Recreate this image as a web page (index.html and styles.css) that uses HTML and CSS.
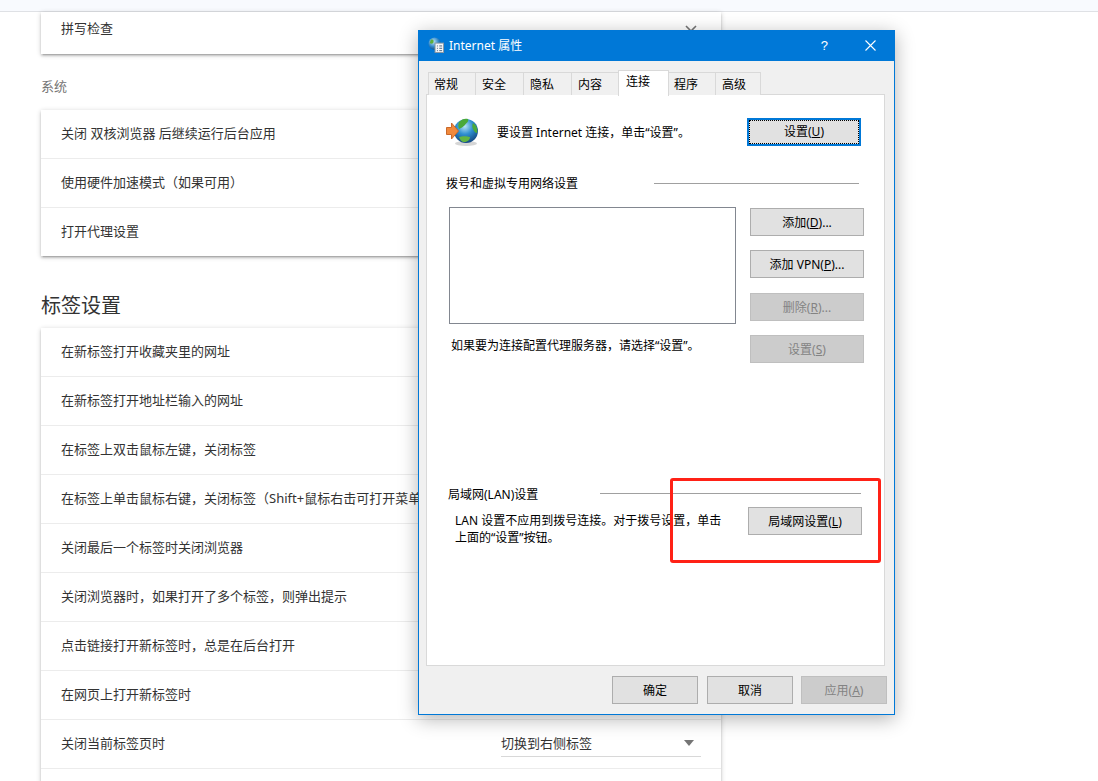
FILE: index.html
```html
<!DOCTYPE html>
<html lang="zh-CN">
<head>
    <meta charset="UTF-8">
    <title>设置</title>
    <link rel="stylesheet" href="styles.css">
</head>
<body>
    <div class="top-bar"></div>

    <main class="settings">
        <section class="card card-first">
            <div class="row row-first">
                <span>拼写检查</span>
                <svg class="chevron" width="12" height="8" viewBox="0 0 12 8"><path d="M1 1l5 5 5-5" fill="none" stroke="#757575" stroke-width="1.6"/></svg>
            </div>
        </section>

        <div class="group-label">系统</div>
        <section class="card">
            <div class="row">关闭 双核浏览器 后继续运行后台应用</div>
            <div class="row">使用硬件加速模式（如果可用）</div>
            <div class="row">打开代理设置</div>
        </section>

        <h2 class="section-title">标签设置</h2>
        <section class="card">
            <div class="row">在新标签打开收藏夹里的网址</div>
            <div class="row">在新标签打开地址栏输入的网址</div>
            <div class="row">在标签上双击鼠标左键，关闭标签</div>
            <div class="row">在标签上单击鼠标右键，关闭标签（Shift+鼠标右击可打开菜单）</div>
            <div class="row">关闭最后一个标签时关闭浏览器</div>
            <div class="row">关闭浏览器时，如果打开了多个标签，则弹出提示</div>
            <div class="row">点击链接打开新标签时，总是在后台打开</div>
            <div class="row">在网页上打开新标签时</div>
            <div class="row">
                <span>关闭当前标签页时</span>
                <div class="select">
                    <span>切换到右侧标签</span>
                    <i class="select-arrow"></i>
                </div>
            </div>
            <div class="row"></div>
        </section>
    </main>

    <div class="dialog">
        <header class="title-bar">
            <svg class="title-icon" width="16" height="16" viewBox="0 0 17 17">
                <defs>
                    <radialGradient id="smallGlobe" cx="0.4" cy="0.35" r="0.7">
                        <stop offset="0" stop-color="#bfe6f7"/>
                        <stop offset="0.6" stop-color="#2f86c8"/>
                        <stop offset="1" stop-color="#15497f"/>
                    </radialGradient>
                </defs>
                <circle cx="7" cy="7" r="6.5" fill="url(#smallGlobe)"/>
                <path d="M3 3c2-1 3 0 3 2S3 8 2 6zM8 9c2-1 4 0 3 2s-3 2-4 1z" fill="#5cae3c"/>
                <rect x="7.5" y="6.5" width="9" height="10" fill="#f4f6f8" stroke="#8b97a3"/>
                <path d="M9.5 9.500h1M12 9.500h3M9.500 12h1M12 12h3M9.500 14.500h1M12 14.500h3" stroke="#44607c"/>
            </svg>
            <span class="title-text">Internet 属性</span>
            <span class="title-help">?</span>
            <svg class="title-close" width="11" height="11" viewBox="0 0 11 11"><path d="M.5.5l10 10M10.500.5l-10 10" stroke="#fff" stroke-width="1.1"/></svg>
        </header>

        <nav class="tabs">
            <span class="tab">常规</span>
            <span class="tab">安全</span>
            <span class="tab">隐私</span>
            <span class="tab">内容</span>
            <span class="tab tab-active">连接</span>
            <span class="tab">程序</span>
            <span class="tab">高级</span>
        </nav>

        <div class="panel">
            <div class="setup">
                <svg class="globe" width="34" height="30" viewBox="0 0 34 30">
                    <defs>
                        <radialGradient id="bigGlobe" cx="0.45" cy="0.3" r="0.75">
                            <stop offset="0" stop-color="#b9e4f6"/>
                            <stop offset="0.45" stop-color="#2f8fd0"/>
                            <stop offset="1" stop-color="#103f78"/>
                        </radialGradient>
                    </defs>
                    <ellipse cx="21" cy="26.500" rx="11" ry="2.500" fill="#d5d5d5"/>
                    <circle cx="21" cy="14" r="12" fill="url(#bigGlobe)"/>
                    <path d="M14 5c3-3 6-4 9-3 1 3-2 4-3 6-2 2-4 3-6 4-1-2-1-5 0-7z" fill="#4aa93a"/>
                    <path d="M14 20c3-1 8-1 11 0 0 3-3 5-6 5-2 0-4-2-5-5z" fill="#62b542"/>
                    <path d="M28 6c3 2 5 5 4 10-2 0-3-2-4-4s-1-4 0-6z" fill="#4aa93a"/>
                    <path d="M1.500 10.500h5V6l7 8-7 8v-4.500h-5z" fill="#f0893c" stroke="#c9682a"/>
                </svg>
                <p class="setup-text">要设置 Internet 连接，单击“设置”。</p>
                <button class="btn btn-default"><span class="btn-focus">设置(<u>U</u>)</span></button>
            </div>

            <div class="legend legend-vpn">
                <span>拨号和虚拟专用网络设置</span>
                <i class="legend-line"></i>
            </div>

            <div class="vpn">
                <div class="vpn-left">
                    <div class="vpn-list"></div>
                    <p class="vpn-note">如果要为连接配置代理服务器，请选择“设置”。</p>
                </div>
                <div class="vpn-buttons">
                    <button class="btn">添加(<u>D</u>)...</button>
                    <button class="btn">添加 VPN(<u>P</u>)...</button>
                    <button class="btn btn-disabled">删除(<u>R</u>)...</button>
                    <button class="btn btn-disabled">设置(<u>S</u>)</button>
                </div>
            </div>

            <div class="legend legend-lan">
                <span>局域网(LAN)设置</span>
                <i class="legend-line"></i>
            </div>

            <div class="lan">
                <p class="lan-text">LAN 设置不应用到拨号连接。对于拨号设置，单击<br>上面的“设置”按钮。</p>
                <button class="btn">局域网设置(<u>L</u>)</button>
            </div>
        </div>

        <footer class="dialog-footer">
            <button class="btn">确定</button>
            <button class="btn">取消</button>
            <button class="btn btn-disabled">应用(<u>A</u>)</button>
        </footer>
    </div>

    <div class="red-mark"></div>
</body>
</html>
```

FILE: styles.css
```css
/* Page behind the dialog */
body {
    margin: 0;
    height: 781px;
    overflow: hidden;
    background-color: #fff;
    font-family: "Noto Sans", "Noto Sans CJK SC", sans-serif;
    font-size: 13px;
    color: #333;
}
p {
    margin: 0;
}
.top-bar {
    height: 11px;
    background-color: #f8fafe;
    border-bottom: 1px solid #dfe1e5;
}
.settings {
    width: 680px;
    margin-left: 41px;
}
.card {
    background-color: #fff;
    box-shadow: 0 2px 2px rgba(0, 0, 0, 0.14), 0 3px 1px -2px rgba(0, 0, 0, 0.12), 0 1px 5px rgba(0, 0, 0, 0.2);
    line-height: 18px;
}
.row {
    display: flex;
    align-items: center;
    justify-content: space-between;
    box-sizing: content-box;
    height: 45px;
    padding: 0 20px 3px;
    border-top: 1px solid #ececec;
    white-space: nowrap;
}
.row:first-child {
    border-top: none;
}
.row-first {
    height: 32px;
    padding-bottom: 10px;
}
.chevron {
    margin-right: 4px;
    margin-top: 2px;
}
.group-label {
    margin: 23px 0 15px;
    line-height: 18px;
    color: #757575;
}
.section-title {
    margin: 36px 0 8px;
    font-size: 20px;
    font-weight: normal;
    line-height: 28px;
    color: #333;
}
.select {
    display: flex;
    align-items: center;
    justify-content: space-between;
    box-sizing: border-box;
    width: 200px;
    height: 27px;
    margin-top: 1px;
    padding-right: 7px;
    border-bottom: 1px solid #d8d8d8;
}
.select-arrow {
    width: 0;
    height: 0;
    border-left: 5px solid transparent;
    border-right: 5px solid transparent;
    border-top: 6px solid #757575;
}

/* Internet properties dialog */
.dialog {
    position: absolute;
    left: 418px;
    top: 30px;
    box-sizing: border-box;
    width: 477px;
    height: 685px;
    border: 1px solid #0078d7;
    background-color: #f0f0f0;
    box-shadow: 0 4px 18px rgba(0, 0, 0, 0.3);
    font-size: 12px;
    color: #000;
}
.title-bar {
    display: flex;
    align-items: center;
    box-sizing: border-box;
    height: 30px;
    padding: 0 0 2px 9px;
    background-color: #0078d7;
    color: #fff;
}
.title-icon {
    margin-right: 5px;
}
.title-text {
    font-size: 12px;
}
.title-help {
    margin-left: auto;
    margin-right: 37px;
    font-family: "Liberation Sans", sans-serif;
    font-size: 13px;
}
.title-close {
    margin-right: 18px;
}
.tabs {
    display: flex;
    align-items: flex-end;
    height: 34px;
    padding-left: 9px;
    margin-bottom: -1px;
    position: relative;
}
.tab {
    box-sizing: border-box;
    width: 48px;
    height: 23px;
    padding-left: 6px;
    border: 1px solid #d9d9d9;
    border-bottom: none;
    border-right: none;
    line-height: 23px;
    background-color: #f0f0f0;
}
.tab:first-child {
    width: 47px;
    padding-left: 5px;
}
.tab:last-child {
    width: 46px;
    border-right: 1px solid #d9d9d9;
}
.tab:nth-child(4) {
    width: 47px;
}
.tab-active {
    width: 51px;
    height: 26px;
    border-right: 1px solid #d9d9d9;
    background-color: #fff;
    position: relative;
    line-height: 22px;
    padding-left: 7px;
    margin-bottom: -1px;
}
.tab-active + .tab {
    border-left: none;
    width: 46px;
    padding-left: 5px;
}
.panel {
    box-sizing: border-box;
    width: 459px;
    height: 572px;
    margin-left: 7px;
    padding-top: 23px;
    border: 1px solid #d9d9d9;
    background-color: #fff;
}
.setup {
    display: flex;
    align-items: center;
    height: 28px;
    padding-left: 18px;
}
.setup-text {
    margin-left: 18px;
}
.btn {
    box-sizing: border-box;
    width: 114px;
    height: 28px;
    padding: 0;
    border: 1px solid #adadad;
    background-color: #e1e1e1;
    font-family: inherit;
    font-size: 12px;
    color: #000;
}
.btn-default {
    margin-left: auto;
    margin-right: 23px;
    border: 2px solid #0078d7;
    padding: 0;
}
.btn-focus {
    display: block;
    height: 24px;
    line-height: 21px;
    box-sizing: border-box;
    border: 1px dotted #000;
}
.btn-disabled {
    background-color: #ccc;
    border-color: #bfbfbf;
    color: #838383;
}
.legend {
    display: flex;
    align-items: center;
    height: 18px;
}
.legend-line {
    margin-left: auto;
    height: 1px;
    background-color: #a0a0a0;
}
.legend-vpn {
    margin: 28px 25px 15px 19px;
}
.legend-vpn .legend-line {
    width: 205px;
}
.legend-lan {
    margin: 122px 23px 4px 21px;
}
.legend-lan .legend-line {
    width: 261px;
}
.vpn {
    display: flex;
    justify-content: space-between;
    margin: 0 20px 0 22px;
}
.vpn-list {
    box-sizing: border-box;
    width: 287px;
    height: 117px;
    border: 1px solid #828790;
}
.vpn-note {
    margin: 13px 0 0 2px;
    line-height: 18px;
}
.vpn-buttons {
    display: flex;
    flex-direction: column;
    gap: 14.34px;
    margin-top: 1px;
}
.lan {
    display: flex;
    justify-content: space-between;
    margin: 0 22px 0 28px;
}
.lan-text {
    padding-top: 5px;
    line-height: 17px;
}
.dialog-footer {
    display: flex;
    justify-content: flex-end;
    gap: 9px;
    margin: 10px 7px 0 0;
}
.dialog-footer .btn {
    width: 86px;
}
.dialog-footer .btn:last-child {
    margin-left: -1px;
}
.red-mark {
    position: absolute;
    left: 670px;
    top: 478px;
    box-sizing: border-box;
    width: 211px;
    height: 85px;
    border: 3px solid #ff2116;
    border-radius: 3px;
}
```
